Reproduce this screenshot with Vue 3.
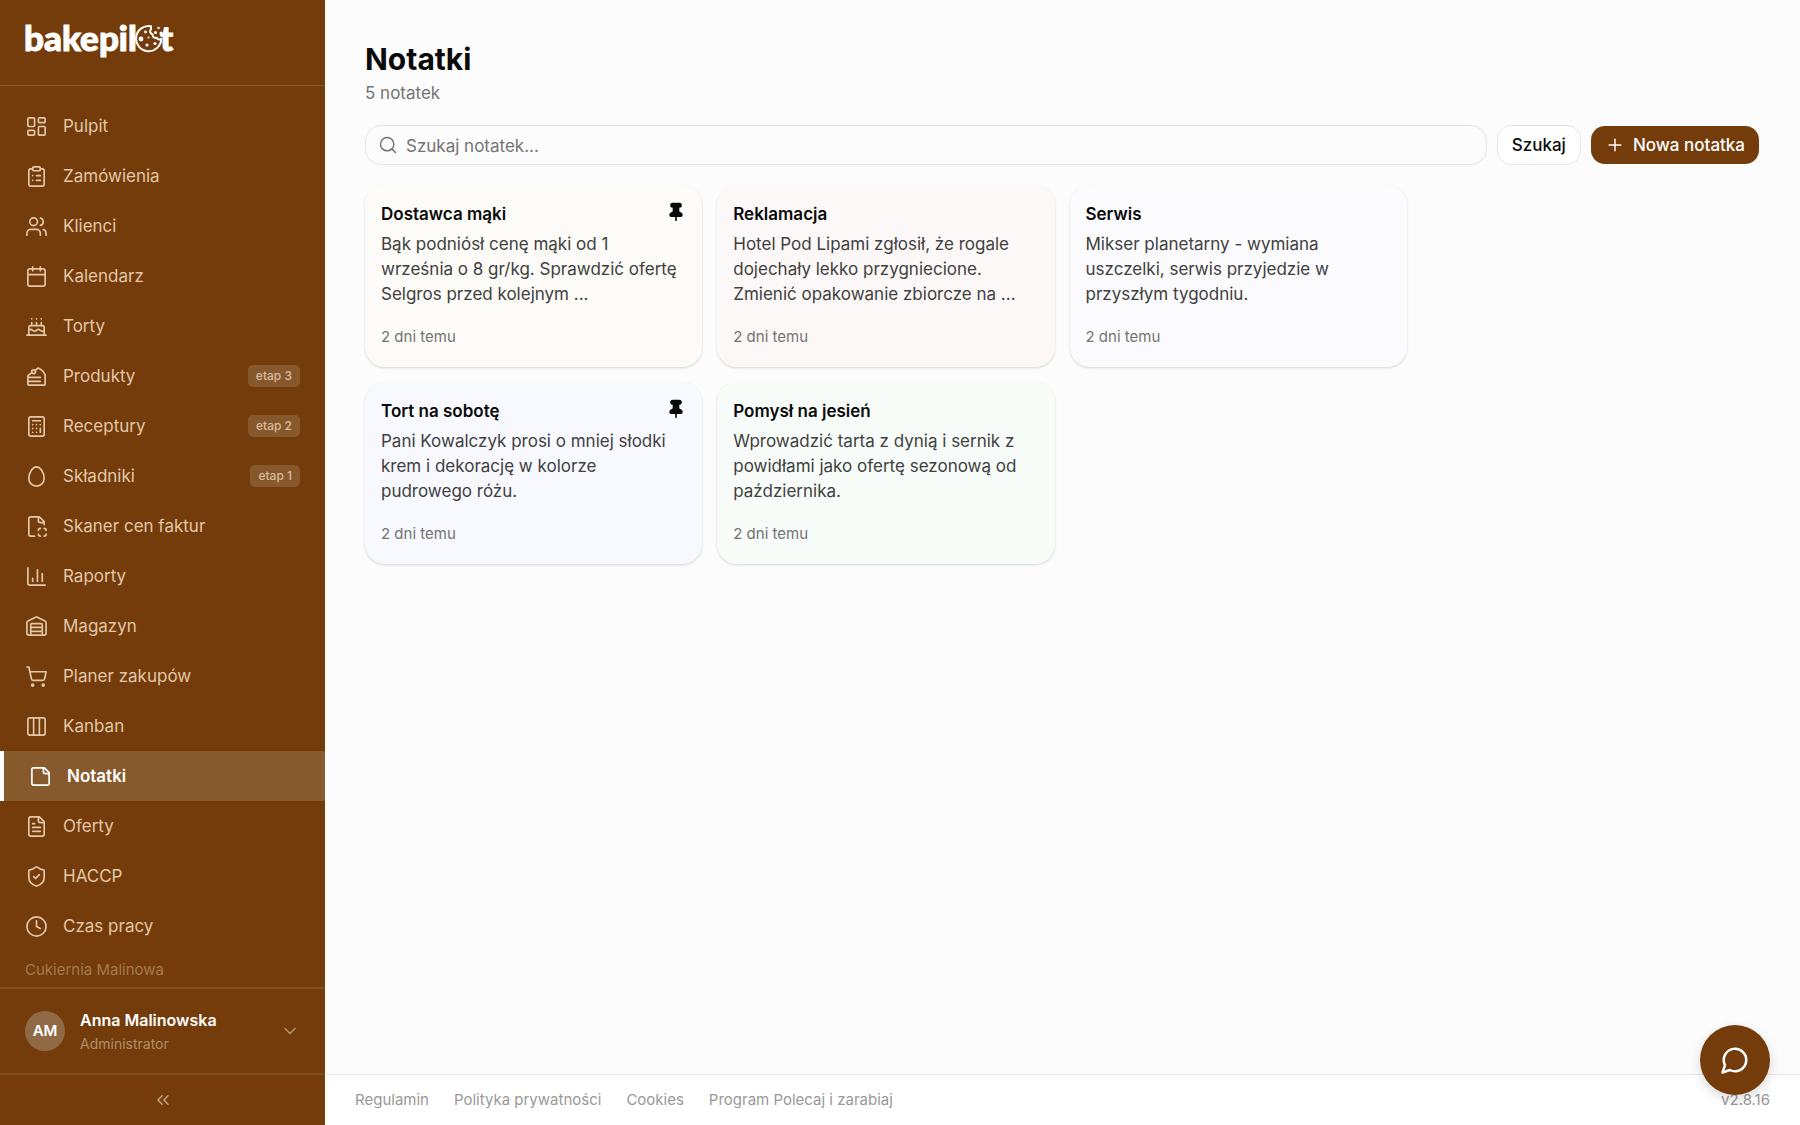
<template>
  <div class="layout">
    <aside class="sidebar">
      <div class="brand">
        <svg class="logo" viewBox="0 0 150 40" role="img" aria-label="bakepilot">
          <text x="-1" y="28" class="logo-text">bakepil</text>
          <g fill="none" stroke="#fff" stroke-width="2" stroke-linejoin="round" stroke-linecap="round">
            <path d="M126 3.200A12.600 12.600 0 1 0 136.300 15.800c-1.800 1-3.800.6-4.700-1-2.300.5-4.400-1-4-3.300-2.500-1-3.300-3.600-1.600-5.300z"/>
          </g>
          <g fill="#fff">
            <circle cx="116" cy="16" r="2.400"/>
            <circle cx="120.500" cy="9" r="1.400"/>
            <circle cx="122" cy="22" r="1.600"/>
            <circle cx="130" cy="20.500" r="1.500"/>
            <circle cx="123.500" cy="14.500" r="1"/>
            <circle cx="130.500" cy="9.500" r="1.500"/>
            <circle cx="133.500" cy="5" r="1.200"/>
            <circle cx="136" cy="10" r="1.500"/>
          </g>
          <text x="135" y="28" class="logo-text">t</text>
        </svg>
      </div>

      <nav class="nav">
        <a v-for="item in items" :key="item.label" href="#" class="nav-item" :class="{ active: item.label === current }" @click.prevent="current = item.label">
          <svg class="icon" viewBox="0 0 24 24"><path v-for="d in icons[item.icon]" :key="d" :d="d"/></svg>
          <span class="nav-label">{{ item.label }}</span>
          <span v-if="item.badge" class="badge">{{ item.badge }}</span>
        </a>
      </nav>

      <div class="company">Cukiernia Malinowa</div>

      <button type="button" class="user">
        <span class="avatar">AM</span>
        <span class="user-info">
          <span class="user-name">Anna Malinowska</span>
          <span class="user-role">Administrator</span>
        </span>
        <svg class="icon chevron" viewBox="0 0 24 24"><path d="m6 9 6 6 6-6"/></svg>
      </button>

      <button type="button" class="collapse" aria-label="Zwiń menu">
        <svg class="icon" viewBox="0 0 24 24"><path d="m11 17-5-5 5-5"/><path d="m18 17-5-5 5-5"/></svg>
      </button>
    </aside>

    <div class="page">
      <main class="content">
        <h1>Notatki</h1>
        <p class="count">{{ notes.length }} notatek</p>

        <form class="toolbar" @submit.prevent>
          <label class="search">
            <svg class="icon" viewBox="0 0 24 24"><path d="m21 21-4.340-4.340"/><circle cx="11" cy="11" r="8"/></svg>
            <input v-model="query" type="text" placeholder="Szukaj notatek..." aria-label="Szukaj notatek"/>
          </label>
          <button type="submit" class="btn btn-outline">Szukaj</button>
          <button type="button" class="btn btn-primary">
            <svg class="icon" viewBox="0 0 24 24"><path d="M5 12h14"/><path d="M12 5v14"/></svg>
            Nowa notatka
          </button>
        </form>

        <div class="notes">
          <article v-for="note in notes" :key="note.title" class="note" :class="note.color">
            <header class="note-head">
              <h2>{{ note.title }}</h2>
              <button v-if="note.pinned" type="button" class="pin" aria-label="Odepnij">
                <svg class="icon" viewBox="0 0 24 24"><path v-for="d in icons.pin" :key="d" :d="d"/></svg>
              </button>
            </header>
            <p class="note-text">{{ note.text }}</p>
            <time class="note-date">2 dni temu</time>
          </article>
        </div>
      </main>

      <footer class="footer">
        <a v-for="link in links" :key="link" href="#">{{ link }}</a>
        <span class="version">v2.8.16</span>
      </footer>
    </div>

    <button type="button" class="chat" aria-label="Czat">
      <svg class="icon" viewBox="0 0 24 24"><path d="M7.900 20A9 9 0 1 0 4 16.100L2 22Z"/></svg>
    </button>
  </div>
</template>

<script setup>
import {ref} from 'vue'

const current = ref('Notatki')
const query = ref('')

const items = [
  { label: 'Pulpit', icon: 'dashboard' },
  { label: 'Zamówienia', icon: 'clipboard' },
  { label: 'Klienci', icon: 'users' },
  { label: 'Kalendarz', icon: 'calendar' },
  { label: 'Torty', icon: 'cake' },
  { label: 'Produkty', icon: 'slice', badge: 'etap 3' },
  { label: 'Receptury', icon: 'calculator', badge: 'etap 2' },
  { label: 'Składniki', icon: 'egg', badge: 'etap 1' },
  { label: 'Skaner cen faktur', icon: 'scan' },
  { label: 'Raporty', icon: 'chart' },
  { label: 'Magazyn', icon: 'warehouse' },
  { label: 'Planer zakupów', icon: 'cart' },
  { label: 'Kanban', icon: 'columns' },
  { label: 'Notatki', icon: 'note' },
  { label: 'Oferty', icon: 'file' },
  { label: 'HACCP', icon: 'shield' },
  { label: 'Czas pracy', icon: 'clock' }
]

// kolejność kolumnami, od lewej
const notes = [
  { title: 'Dostawca mąki', text: 'Bąk podniósł cenę mąki od 1 września o 8 gr/kg. Sprawdzić ofertę Selgros przed kolejnym ...', color: 'yellow', pinned: true },
  { title: 'Tort na sobotę', text: 'Pani Kowalczyk prosi o mniej słodki krem i dekorację w kolorze pudrowego różu.', color: 'blue', pinned: true },
  { title: 'Reklamacja', text: 'Hotel Pod Lipami zgłosił, że rogale dojechały lekko przygniecione. Zmienić opakowanie zbiorcze na ...', color: 'red' },
  { title: 'Pomysł na jesień', text: 'Wprowadzić tarta z dynią i sernik z powidłami jako ofertę sezonową od października.', color: 'green' },
  { title: 'Serwis', text: 'Mikser planetarny - wymiana uszczelki, serwis przyjedzie w przyszłym tygodniu.', color: 'gray' }
]

const links = ['Regulamin', 'Polityka prywatności', 'Cookies', 'Program Polecaj i zarabiaj']

const icons = {
  dashboard: ['M4 3h5a1 1 0 0 1 1 1v7a1 1 0 0 1-1 1H4a1 1 0 0 1-1-1V4a1 1 0 0 1 1-1z', 'M15 3h5a1 1 0 0 1 1 1v3a1 1 0 0 1-1 1h-5a1 1 0 0 1-1-1V4a1 1 0 0 1 1-1z', 'M15 12h5a1 1 0 0 1 1 1v7a1 1 0 0 1-1 1h-5a1 1 0 0 1-1-1v-7a1 1 0 0 1 1-1z', 'M4 16h5a1 1 0 0 1 1 1v3a1 1 0 0 1-1 1H4a1 1 0 0 1-1-1v-3a1 1 0 0 1 1-1z'],
  clipboard: ['M9 2h6a1 1 0 0 1 1 1v2a1 1 0 0 1-1 1H9a1 1 0 0 1-1-1V3a1 1 0 0 1 1-1z', 'M16 4h2a2 2 0 0 1 2 2v14a2 2 0 0 1-2 2H6a2 2 0 0 1-2-2V6a2 2 0 0 1 2-2h2', 'M12 11h4', 'M12 16h4', 'M8 11h.01', 'M8 16h.01'],
  users: ['M16 21v-2a4 4 0 0 0-4-4H6a4 4 0 0 0-4 4v2', 'M5 7a4 4 0 1 0 8 0 4 4 0 1 0-8 0', 'M22 21v-2a4 4 0 0 0-3-3.870', 'M16 3.130a4 4 0 0 1 0 7.750'],
  calendar: ['M8 2v4', 'M16 2v4', 'M5 4h14a2 2 0 0 1 2 2v14a2 2 0 0 1-2 2H5a2 2 0 0 1-2-2V6a2 2 0 0 1 2-2z', 'M3 10h18'],
  cake: ['M20 21v-8a2 2 0 0 0-2-2H6a2 2 0 0 0-2 2v8', 'M4 16s.5-1 2-1 2.500 2 4 2 2.500-2 4-2 2.500 2 4 2 2-1 2-1', 'M2 21h20', 'M7 8v3', 'M12 8v3', 'M17 8v3', 'M7 4h.01', 'M12 4h.01', 'M17 4h.01'],
  slice: ['M16 13H3', 'M16 17H3', 'm7.200 7.900-3.388 2.500A2 2 0 0 0 3 12.010V20a1 1 0 0 0 1 1h16a1 1 0 0 0 1-1v-8.654c0-2-2.440-6.026-6.440-8.026a1 1 0 0 0-1.082.057L10.400 5.600', 'M7 7a2 2 0 1 0 4 0 2 2 0 1 0-4 0'],
  calculator: ['M6 2h12a2 2 0 0 1 2 2v16a2 2 0 0 1-2 2H6a2 2 0 0 1-2-2V4a2 2 0 0 1 2-2z', 'M8 6h8', 'M16 14v4', 'M16 10h.01', 'M12 10h.01', 'M8 10h.01', 'M12 14h.01', 'M8 14h.01', 'M12 18h.01', 'M8 18h.01'],
  egg: ['M12 2C8 2 4 8 4 14a8 8 0 0 0 16 0c0-6-4-12-8-12'],
  scan: ['M20 10V7l-5-5H6a2 2 0 0 0-2 2v16a2 2 0 0 0 2 2h4', 'M14 2v4a2 2 0 0 0 2 2h4', 'M16 14a2 2 0 0 0-2 2', 'M20 14a2 2 0 0 1 2 2', 'M20 22a2 2 0 0 0 2-2', 'M16 22a2 2 0 0 1-2-2'],
  chart: ['M3 3v16a2 2 0 0 0 2 2h16', 'M18 17V9', 'M13 17V5', 'M8 17v-3'],
  warehouse: ['M18 21V10a1 1 0 0 0-1-1H7a1 1 0 0 0-1 1v11', 'M22 19a2 2 0 0 1-2 2H4a2 2 0 0 1-2-2V8a2 2 0 0 1 1.132-1.803l7.950-3.974a2 2 0 0 1 1.837 0l7.948 3.974A2 2 0 0 1 22 8z', 'M6 13h12', 'M6 17h12'],
  cart: ['M7 21a1 1 0 1 0 2 0 1 1 0 1 0-2 0', 'M18 21a1 1 0 1 0 2 0 1 1 0 1 0-2 0', 'M2.050 2.050h2l2.660 12.420a2 2 0 0 0 2 1.580h9.780a2 2 0 0 0 1.950-1.570l1.650-7.430H5.120'],
  columns: ['M5 3h14a2 2 0 0 1 2 2v14a2 2 0 0 1-2 2H5a2 2 0 0 1-2-2V5a2 2 0 0 1 2-2z', 'M9 3v18', 'M15 3v18'],
  note: ['M16 3H5a2 2 0 0 0-2 2v14a2 2 0 0 0 2 2h14a2 2 0 0 0 2-2V8Z', 'M15 3v4a2 2 0 0 0 2 2h4'],
  file: ['M15 2H6a2 2 0 0 0-2 2v16a2 2 0 0 0 2 2h12a2 2 0 0 0 2-2V7Z', 'M14 2v4a2 2 0 0 0 2 2h4', 'M10 9H8', 'M16 13H8', 'M16 17H8'],
  shield: ['M20 13c0 5-3.500 7.500-7.660 8.950a1 1 0 0 1-.670-.010C7.500 20.500 4 18 4 13V6a1 1 0 0 1 1-1c2 0 4.500-1.200 6.240-2.720a1.170 1.170 0 0 1 1.520 0C14.510 3.810 17 5 19 5a1 1 0 0 1 1 1z', 'm9 12 2 2 4-4'],
  clock: ['M2 12a10 10 0 1 0 20 0 10 10 0 1 0-20 0', 'M12 6v6l4 2'],
  pin: ['M12 17v5', 'M9 10.760a2 2 0 0 1-1.110 1.790l-1.780.900A2 2 0 0 0 5 15.240V16a1 1 0 0 0 1 1h12a1 1 0 0 0 1-1v-.760a2 2 0 0 0-1.110-1.790l-1.780-.900A2 2 0 0 1 15 10.760V7a1 1 0 0 1 1-1 2 2 0 0 0 0-4H8a2 2 0 0 0 0 4 1 1 0 0 1 1 1z']
}
</script>

<style>
body {
  margin: 0;
  background: #fcfcfc;
}
</style>

<style scoped>
.layout {
  display: flex;
  height: 100vh;
  font-family: Inter, "Liberation Sans", sans-serif;
  font-size: 17px;
  line-height: 25px;
  color: #0a0a0a;
}

button,
input {
  font: inherit;
  color: inherit;
  border: none;
  background: none;
  padding: 0;
  margin: 0;
}

button {
  cursor: pointer;
}

a {
  color: inherit;
  text-decoration: none;
}

.icon {
  width: 23px;
  height: 23px;
  flex: none;
  fill: none;
  stroke: currentColor;
  stroke-width: 1.75;
  stroke-linecap: round;
  stroke-linejoin: round;
}

.sidebar {
  width: 325px;
  flex: none;
  display: flex;
  flex-direction: column;
  background: #733c0a;
  color: #e3c7a9;
}

.brand {
  height: 85px;
  flex: none;
  box-sizing: border-box;
  padding: 23px 25px 0;
}

.logo {
  display: block;
  width: 150px;
  height: 40px;
  overflow: visible;
}

.logo-text {
  font-family: Lato, sans-serif;
  font-size: 35px;
  font-weight: 900;
  fill: #fff;
  stroke: #fff;
  stroke-width: 1;
}

.nav {
  flex: 1;
  min-height: 0;
  overflow: hidden;
  padding-top: 15px;
  border-top: 1px solid #8a5b2e;
}

.nav-item {
  display: flex;
  align-items: center;
  gap: 15px;
  height: 50px;
  padding: 0 25px;
}

.nav-item.active {
  background: #875a2e;
  border-left: 4px solid #fff;
  color: #fff;
  font-weight: 600;
}

.nav-label {
  flex: 1;
}

.badge {
  padding: 0 8px;
  border-radius: 5px;
  background: #87582c;
  color: #d8bc9f;
  font-size: 12px;
  font-weight: 500;
  line-height: 22px;
}

.company {
  flex: none;
  padding: 7px 25px 5px;
  font-size: 15px;
  color: #a47a50;
}

.user {
  display: flex;
  align-items: center;
  gap: 15px;
  height: 86px;
  flex: none;
  padding: 0 25px;
  border-top: 2px solid #80501f;
  text-align: left;
}

.avatar {
  width: 40px;
  height: 40px;
  flex: none;
  border-radius: 50%;
  background: #8f6a45;
  color: #fff;
  font-size: 15px;
  font-weight: 600;
  line-height: 40px;
  text-align: center;
}

.user-info {
  flex: 1;
  display: flex;
  flex-direction: column;
}

.user-name {
  font-size: 16px;
  font-weight: 600;
  line-height: 25px;
  color: #fff;
}

.user-role {
  font-size: 14px;
  line-height: 22px;
  color: #b08f6c;
}

.chevron {
  width: 20px;
  height: 20px;
  stroke-width: 2;
  color: #b08f6c;
}

.collapse {
  display: flex;
  align-items: center;
  justify-content: center;
  height: 52px;
  flex: none;
  border-top: 2px solid #80501f;
  color: #c5a684;
}

.collapse .icon {
  width: 20px;
  height: 20px;
}

.page {
  flex: 1;
  min-width: 0;
  display: flex;
  flex-direction: column;
}

.content {
  flex: 1;
  padding: 39px 41px 40px 40px;
}

h1 {
  margin: 0 0 2px;
  font-size: 30px;
  font-weight: 700;
  line-height: 40px;
}

.count {
  margin: 0 0 19px;
  color: #737373;
}

.toolbar {
  display: flex;
  align-items: center;
  gap: 10px;
  margin-bottom: 20px;
}

.search {
  flex: 1;
  display: flex;
  align-items: center;
  gap: 8px;
  height: 40px;
  box-sizing: border-box;
  padding: 0 12px;
  border: 1px solid #e5e5e5;
  border-radius: 16px;
  color: #737373;
}

.search .icon {
  width: 20px;
  height: 20px;
}

.search input {
  flex: 1;
  min-width: 0;
  padding-top: 2px;
  outline: none;
}

.search input::placeholder {
  color: #737373;
  opacity: 1;
}

.btn {
  display: flex;
  align-items: center;
  gap: 8px;
  height: 38px;
  padding: 0 14px;
  border-radius: 14px;
  font-weight: 500;
}

.btn-outline {
  height: 40px;
  border: 1px solid #e5e5e5;
  background: #fff;
}

.btn-primary {
  background: #733c0a;
  color: #fff;
}

.btn .icon {
  width: 20px;
  height: 20px;
}

.notes {
  columns: 4;
  column-gap: 15px;
}

.note {
  display: flex;
  flex-direction: column;
  box-sizing: border-box;
  min-height: 182px;
  margin-bottom: 15px;
  padding: 17px 16px 16px;
  border-radius: 20px;
  box-shadow: 0 1px 3px rgba(0, 0, 0, 0.1), 0 1px 2px rgba(0, 0, 0, 0.06);
  break-inside: avoid;
}

.yellow { background: #fcfbf7; }
.red { background: #fdf8f8; }
.gray { background: #fbfbfd; }
.blue { background: #f8f9fe; }
.green { background: #f8fcf9; }

.note-head {
  display: flex;
  justify-content: space-between;
  margin-bottom: 5px;
}

h2 {
  margin: 0;
  font-size: 17px;
  font-weight: 600;
  line-height: 25px;
}

.pin {
  height: 20px;
}

.pin .icon {
  display: block;
  width: 20px;
  height: 20px;
  fill: currentColor;
  stroke-width: 2;
}

.note-text {
  margin: 0 0 20px;
  padding-right: 4px;
  color: #404040;
}

.note-date {
  font-size: 15px;
  line-height: 20px;
  color: #737373;
}

.footer {
  display: flex;
  align-items: center;
  gap: 25px;
  height: 48px;
  flex: none;
  padding: 0 30px 2px;
  border-top: 1px solid #e8e8e8;
  background: #fff;
  font-size: 15px;
  color: #999;
}

.version {
  margin-left: auto;
}

.chat {
  position: fixed;
  right: 30px;
  bottom: 30px;
  display: flex;
  align-items: center;
  justify-content: center;
  width: 70px;
  height: 70px;
  border-radius: 50%;
  background: #733c0a;
  color: #fff;
  box-shadow: 0 4px 12px rgba(0, 0, 0, 0.15);
}

.chat .icon {
  width: 30px;
  height: 30px;
  stroke-width: 2;
}
</style>
